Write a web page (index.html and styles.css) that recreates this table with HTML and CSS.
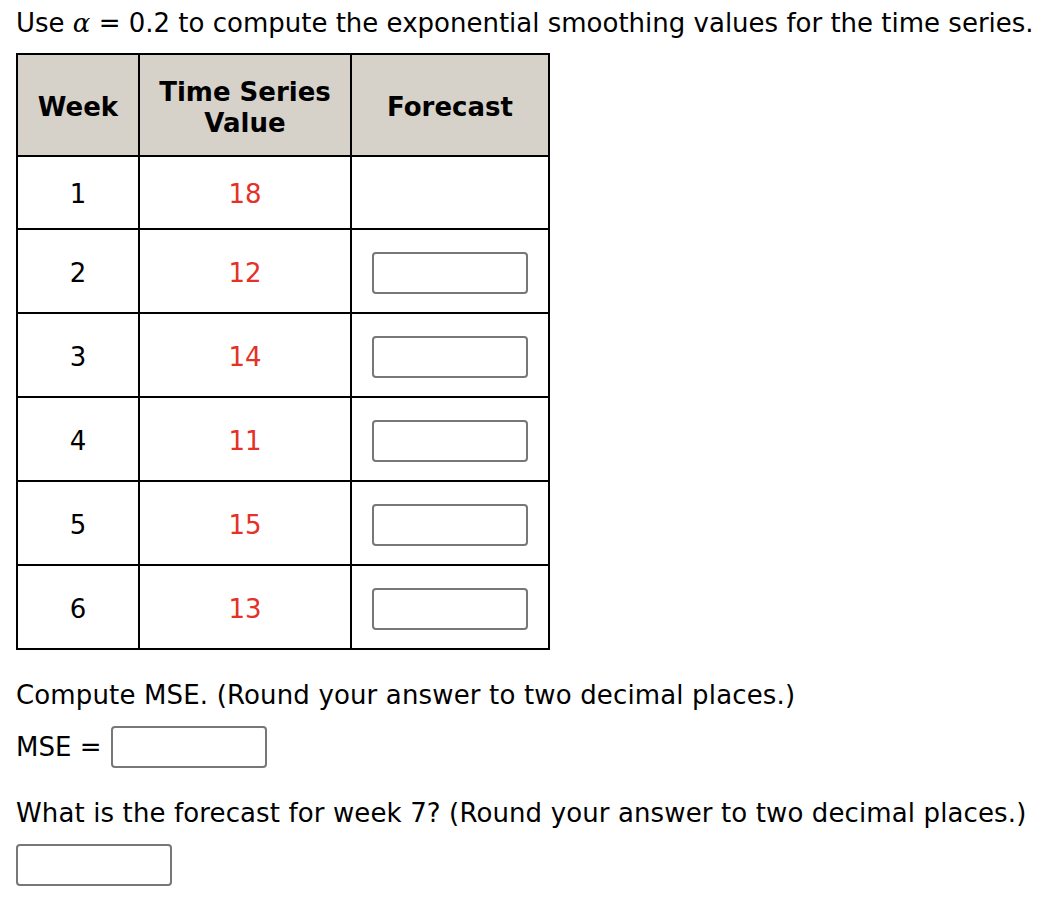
FILE: index.html
```html
<!DOCTYPE html>
<html>
<head>
<meta charset="utf-8">
<link rel="stylesheet" href="styles.css">
</head>
<body>
<p class="intro">Use <span class="math">α</span> = 0.2 to compute the exponential smoothing values for the time series.</p>
<table class="data">
  <thead>
    <tr>
      <th class="c1"><span class="hd">Week</span></th>
      <th class="c2"><span class="hd">Time Series<br>Value</span></th>
      <th class="c3"><span class="hd">Forecast</span></th>
    </tr>
  </thead>
  <tbody>
    <tr class="first"><td><span class="cell">1</span></td><td class="val"><span class="cell">18</span></td><td></td></tr>
    <tr><td><span class="cell">2</span></td><td class="val"><span class="cell">12</span></td><td><span class="cell"><input class="box" type="text"></span></td></tr>
    <tr><td><span class="cell">3</span></td><td class="val"><span class="cell">14</span></td><td><span class="cell"><input class="box" type="text"></span></td></tr>
    <tr><td><span class="cell">4</span></td><td class="val"><span class="cell">11</span></td><td><span class="cell"><input class="box" type="text"></span></td></tr>
    <tr><td><span class="cell">5</span></td><td class="val"><span class="cell">15</span></td><td><span class="cell"><input class="box" type="text"></span></td></tr>
    <tr><td><span class="cell">6</span></td><td class="val"><span class="cell">13</span></td><td><span class="cell"><input class="box" type="text"></span></td></tr>
  </tbody>
</table>
<p class="q1">Compute MSE. (Round your answer to two decimal places.)</p>
<div class="mse-row"><span class="label">MSE =</span><input class="box" type="text"></div>
<p class="q2">What is the forecast for week 7? (Round your answer to two decimal places.)</p>
<div class="last-row"><input class="box" type="text"></div>
</body>
</html>
```
FILE: styles.css
```css
html, body {
  background: #fff;
}
body {
  margin: 0;
  padding: 8px 16px;
  font-family: "DejaVu Sans", Verdana, sans-serif;
  font-size: 26px;
  color: #000;
}
p {
  margin: 0;
  line-height: 30px;
  white-space: nowrap;
}
.math {
  font-family: "DejaVu Serif", "Liberation Serif", serif;
  font-style: italic;
}
.data {
  margin-top: 15px;
  border-collapse: separate;
  border-spacing: 0;
  border-top: 2px solid #000;
  border-left: 2px solid #000;
  table-layout: fixed;
}
.data th, .data td {
  border-right: 2px solid #000;
  border-bottom: 2px solid #000;
  padding: 0;
  text-align: center;
  vertical-align: middle;
}
.data th {
  background: #d6d2ca;
  font-weight: bold;
  height: 100px;
  line-height: 31px;
  font-size: 26px;
}
.hd {
  display: block;
  padding-top: 5px;
}
.cell {
  display: block;
  padding-top: 3px;
}
.c1 { width: 120px; }
.c2 { width: 210px; }
.c3 { width: 196px; }
.data td {
  height: 82px;
}
.data tr.first td {
  height: 71px;
}
.val {
  color: #e53127;
}
.box {
  display: block;
  box-sizing: border-box;
  width: 156px;
  height: 42px;
  border: 2px solid #777;
  border-radius: 4px;
  background: #fff;
  margin: 0;
  padding: 0;
}
.data .box {
  margin: 0 auto;
}
.q1 {
  margin-top: 30px;
  letter-spacing: 0.15px;
}
.mse-row {
  display: flex;
  align-items: center;
  gap: 10px;
  margin-top: 16px;
}
.q2 {
  margin-top: 30px;
  letter-spacing: 0.12px;
}
.last-row {
  margin-top: 16px;
}
```
